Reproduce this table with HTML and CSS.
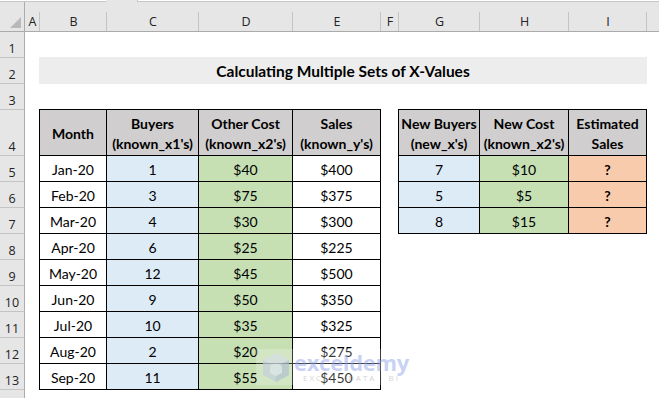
FILE: index.html
```html
<!DOCTYPE html>
<html>
<head>
<meta charset="utf-8">
<link rel="stylesheet" href="styles.css">
</head>
<body>
<div class="topbar"><span class="tbox tbox-name"></span><span class="tgap"></span><span class="tbox tbox-formula"></span></div>
<div class="sheet">
  <div class="corner"><svg width="24" height="29" viewBox="0 0 24 29"><polygon points="10,26 21,26 21,15" fill="#b9b9b9"/></svg></div>
  <div class="ch">A</div>
  <div class="ch">B</div>
  <div class="ch">C</div>
  <div class="ch">D</div>
  <div class="ch">E</div>
  <div class="ch">F</div>
  <div class="ch">G</div>
  <div class="ch">H</div>
  <div class="ch">I</div>
  <div class="ch ch-last"></div>

  <div class="rh">1</div>
  <div class="rh">2</div>
  <div class="rh">3</div>
  <div class="rh">4</div>
  <div class="rh">5</div>
  <div class="rh">6</div>
  <div class="rh">7</div>
  <div class="rh">8</div>
  <div class="rh">9</div>
  <div class="rh">10</div>
  <div class="rh">11</div>
  <div class="rh">12</div>
  <div class="rh">13</div>
  <div class="rh rh-last"></div>

  <div class="title">Calculating Multiple Sets of X-Values</div>

  <div class="tbl t1">
    <div class="c hd">Month</div>
    <div class="c hd">Buyers<br>(known_x1's)</div>
    <div class="c hd">Other Cost<br>(known_x2's)</div>
    <div class="c hd">Sales<br>(known_y's)</div>

    <div class="c">Jan-20</div><div class="c blue">1</div><div class="c green">$40</div><div class="c">$400</div>
    <div class="c">Feb-20</div><div class="c blue">3</div><div class="c green">$75</div><div class="c">$375</div>
    <div class="c">Mar-20</div><div class="c blue">4</div><div class="c green">$30</div><div class="c">$300</div>
    <div class="c">Apr-20</div><div class="c blue">6</div><div class="c green">$25</div><div class="c">$225</div>
    <div class="c">May-20</div><div class="c blue">12</div><div class="c green">$45</div><div class="c">$500</div>
    <div class="c">Jun-20</div><div class="c blue">9</div><div class="c green">$50</div><div class="c">$350</div>
    <div class="c">Jul-20</div><div class="c blue">10</div><div class="c green">$35</div><div class="c">$325</div>
    <div class="c">Aug-20</div><div class="c blue">2</div><div class="c green">$20</div><div class="c">$275</div>
    <div class="c">Sep-20</div><div class="c blue">11</div><div class="c green">$55</div><div class="c">$450</div>
  </div>

  <div class="tbl t2">
    <div class="c hd">New Buyers<br>(new_x's)</div>
    <div class="c hd">New Cost<br>(known_x2's)</div>
    <div class="c hd">Estimated<br>Sales</div>

    <div class="c blue">7</div><div class="c green">$10</div><div class="c orange">?</div>
    <div class="c blue">5</div><div class="c green">$5</div><div class="c orange">?</div>
    <div class="c blue">8</div><div class="c green">$15</div><div class="c orange">?</div>
  </div>
</div>

<div class="wm">
  <svg class="wm-logo" width="32" height="32" viewBox="0 0 32 32">
    <polygon points="16,2 29,9 29,24 16,31 3,24 3,9" fill="#c9d3de"/>
    <polygon points="16,2 29,9 16,16 3,9" fill="#d8e0ea"/>
    <polygon points="16,16 29,9 29,24 16,31" fill="#b8c6d4"/>
    <polygon points="10,15 16,12 22,15 22,22 16,25 10,22" fill="#dfe6ee"/>
  </svg>
  <div class="wm-text">
    <span class="wm-name">exceldemy</span>
    <span class="wm-sub">EXCEL · DATA · BI</span>
  </div>
</div>
</body>
</html>
```

FILE: styles.css
```css
* { box-sizing: border-box; }

html, body {
  margin: 0;
  padding: 0;
}

body {
  width: 659px;
  height: 398px;
  overflow: hidden;
  background: #ffffff;
  position: relative;
  font-family: "Lato", "Liberation Sans", sans-serif;
  color: #000;
}

.topbar {
  display: flex;
  height: 2px;
  background: #e6e6e6;
}

.tbox {
  height: 2px;
  background: #fff;
  border-bottom: 1px solid #c6c6c6;
}

.tbox-name { width: 106px; }
.tgap { width: 31px; }
.tbox-formula { flex: 1; border-left: 1px solid #c6c6c6; }

.sheet {
  display: grid;
  grid-template-columns: 25px 15px 67px 92px 94px 88px 18px 81px 89px 78px 1fr;
  grid-template-rows: 30px 26px 26px 26px 46px repeat(9, 26px) 1fr;
  height: 396px;
}

.corner {
  background: #e6e6e6;
  border-right: 1px solid #ababab;
  border-bottom: 1px solid #ababab;
  position: relative;
}

.corner svg {
  display: block;
}

.ch {
  background-color: #e6e6e6;
  background-image: linear-gradient(#c4c4c4, #c4c4c4);
  background-size: 1px 19px;
  background-position: right bottom;
  background-repeat: no-repeat;
  border-bottom: 1px solid #ababab;
  display: flex;
  align-items: center;
  justify-content: center;
  padding-top: 10px;
  font-family: "Open Sans", "Liberation Sans", sans-serif;
  font-size: 12.5px;
  color: #222;
}

.ch-last {
  background-image: none;
}

.rh {
  grid-column: 1;
  background: #e6e6e6;
  border-right: 1px solid #ababab;
  border-bottom: 1px solid #c4c4c4;
  display: flex;
  align-items: flex-end;
  justify-content: center;
  font-family: "Open Sans", "Liberation Sans", sans-serif;
  font-size: 12.5px;
  line-height: 16px;
  color: #222;
}

.rh-last {
  border-bottom: none;
}

.title {
  grid-column: 3 / 11;
  grid-row: 3;
  margin: -1px 0 0 -1px;
  background: #ededed;
  display: flex;
  align-items: center;
  justify-content: center;
  font-weight: 700;
  font-size: 15.5px;
  padding-top: 1px;
}

.tbl {
  display: grid;
  align-self: start;
  justify-self: start;
  margin: -1px 0 0 -1px;
  border-left: 1px solid #000;
  border-top: 1px solid #000;
  font-size: 14px;
}

.t1 {
  grid-column: 3 / 7;
  grid-row: 5 / 15;
  grid-template-columns: 67px 92px 94px 88px;
  grid-template-rows: 46px repeat(9, 26px);
}

.t2 {
  grid-column: 8 / 11;
  grid-row: 5 / 9;
  grid-template-columns: 81px 89px 78px;
  grid-template-rows: 46px repeat(3, 26px);
}

.c {
  border-right: 1px solid #000;
  border-bottom: 1px solid #000;
  display: flex;
  align-items: center;
  justify-content: center;
  text-align: center;
  padding-top: 1px;
  white-space: nowrap;
}

.hd {
  background: #d0cece;
  font-weight: 700;
  line-height: 20px;
  padding-top: 3px;
}

.blue { background: #ddebf7; }
.green { background: #c6e0b4; }
.orange { background: #f8cbad; font-weight: 700; }

.wm {
  position: absolute;
  left: 256px;
  top: 349px;
  display: flex;
  align-items: center;
  gap: 2px;
  padding: 2px 4px;
  background: rgba(255, 255, 255, 0.3);
  opacity: 0.75;
  pointer-events: none;
}

.wm-logo {
  display: block;
}

.wm-text {
  display: flex;
  flex-direction: column;
  align-items: center;
}

.wm-name {
  font-family: "Open Sans", "Liberation Sans", sans-serif;
  font-weight: 700;
  font-size: 22px;
  line-height: 22px;
  color: rgba(150, 168, 235, 0.7);
  letter-spacing: -0.3px;
}

.wm-sub {
  font-family: "Open Sans", "Liberation Sans", sans-serif;
  font-size: 8px;
  line-height: 10px;
  letter-spacing: 2px;
  color: rgba(170, 170, 170, 0.7);
}
```
